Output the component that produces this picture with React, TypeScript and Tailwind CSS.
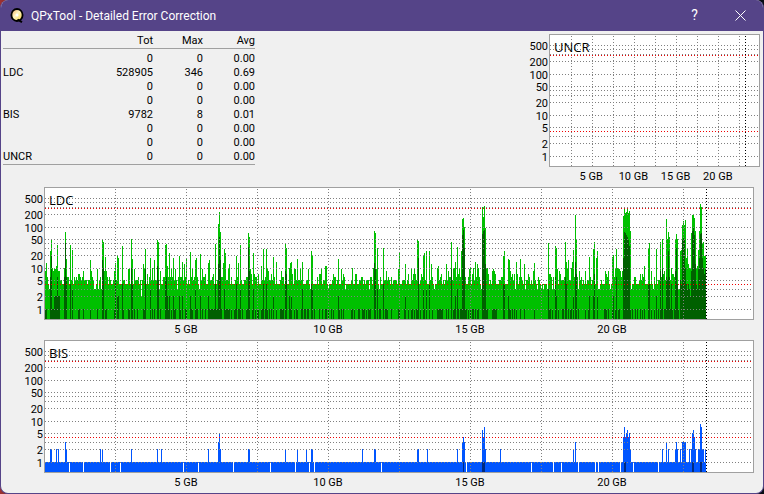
interface Row {
  name: string;
  tot: number;
  max: number;
  avg: string;
}

interface Series {
  max: number[];
  avg: number[];
  maxColor: string;
  avgColor: string;
}

const rows: Row[] = [
  { name: "", tot: 0, max: 0, avg: "0.00" },
  { name: "LDC", tot: 528905, max: 346, avg: "0.69" },
  { name: "", tot: 0, max: 0, avg: "0.00" },
  { name: "", tot: 0, max: 0, avg: "0.00" },
  { name: "BIS", tot: 9782, max: 8, avg: "0.01" },
  { name: "", tot: 0, max: 0, avg: "0.00" },
  { name: "", tot: 0, max: 0, avg: "0.00" },
  { name: "UNCR", tot: 0, max: 0, avg: "0.00" },
];

const COLUMNS = 661;
const FIRST = 45;
const PLOT_HEIGHT = 131;
const TICKS = [500, 200, 100, 50, 20, 10, 5, 2, 1];
const GRID = [500, 400, 300, 200, 100, 50, 40, 30, 20, 10, 5, 3, 2, 1];
const SIZES = ["5 GB", "10 GB", "15 GB", "20 GB"];

// "column:errors" pairs, columns without an entry hold background noise
const LDC_MAX = `45:8 46:13 47:6 48:4 49:3 50:25 51:50 52:10 53:8 54:10 55:9 56:11 57:35 58:8 59:8 60:5 61:5 62:4
64:10 65:72 66:16 67:6 68:6 69:4 70:35 71:5 72:27 73:4 74:6 75:5 76:6 77:5 78:7 79:7 80:6 81:5 82:6 83:8 84:5 85:5
86:5 87:4 88:5 89:5 90:15 91:8 92:6 93:5 94:3 95:3 96:4 97:9 98:3 99:5 100:6 101:3 102:50 103:42 104:8 105:18 106:8
107:6 108:4 109:6 110:5 111:4 112:4 113:5 114:8 115:13 116:5 117:19 118:17 119:4 120:4 121:4 122:33 123:5 124:5
125:4 126:4 127:4 128:9 129:9 130:4 131:50 132:16 133:4 134:9 135:5 136:5 137:5 138:6 139:4 140:5 141:2 142:5
143:12 144:10 145:28 146:4 147:7 148:4 149:6 150:17 151:5 152:10 153:5 154:15 155:5 156:5 157:47 158:42 159:3 160:8
161:4 162:4 163:6 164:6 165:35 166:37 167:11 168:6 169:22 170:6 171:10 172:6 173:17 174:5 175:9 176:5 177:3 178:6
179:19 180:6 181:6 182:14 183:5 184:12 185:6 186:16 188:5 190:24 191:6 192:10 195:15 196:17 197:6 198:4 199:3 200:21
202:9 205:7 208:13 209:15 213:7 215:37 218:114 219:232 220:72 221:6 222:6 223:13 224:28 225:22 228:10 229:12 231:6
233:4 234:4 236:19 238:13 240:35 241:5 248:69 249:55 250:9 251:7 252:4 253:22 254:7 258:7 261:11 263:28 264:5 266:28
267:10 268:8 271:7 273:18 274:6 276:14 278:4 279:4 281:8 285:37 286:30 287:4 288:4 289:10 290:13 291:14 292:7 293:4
294:10 295:9 297:16 300:9 302:14 304:4 305:4 308:9 310:3 311:25 312:20 314:4 315:4 316:4 319:7 320:7 321:9 325:11
326:11 328:3 333:7 338:16 341:9 343:7 345:3 346:4 347:4 348:4 349:4 350:4 352:10 353:4 355:7 356:7 357:4 358:4 369:3
373:10 374:77 375:69 376:9 377:30 378:4 379:3 383:30 386:8 391:6 398:9 399:22 400:4 405:12 408:7 411:9 413:7 414:9
415:7 417:50 418:44 421:7 423:19 424:22 426:25 429:25 431:12 434:3 437:10 438:11 441:7 446:12 448:8 451:41 453:9
454:10 455:14 456:6 457:31 458:7 459:9 460:6 461:25 462:151 463:160 464:96 465:6 466:4 467:4 469:9 470:10 472:7
473:10 475:14 477:12 478:10 479:6 480:4 481:3 482:296 483:169 484:313 485:91 486:10 487:10 488:7 491:4 492:8 493:9
494:8 495:7 503:19 504:25 505:4 508:16 509:15 510:8 512:7 514:7 515:3 516:14 517:7 518:4 520:16 521:6 524:12 525:3
528:7 533:8 534:13 535:5 536:4 537:3 538:6 539:5 540:4 541:3 542:4 543:3 544:4 545:4 546:4 547:3 548:39 549:7 550:7
551:6 552:3 553:6 554:3 555:33 556:30 557:9 559:8 560:7 565:41 566:14 567:9 568:15 571:10 572:14 573:26 574:6 575:189
576:50 577:6 578:3 579:8 585:8 589:18 593:28 594:41 596:17 597:25 598:3 599:3 600:4 605:8 606:7 608:8 610:3 611:4
612:18 613:20 614:6 615:10 616:28 617:10 618:10 619:9 620:8 621:6 622:8 623:178 624:265 625:211 626:224 627:280
628:211 629:237 630:77 631:3 632:4 633:4 640:7 642:7 644:11 648:30 649:39 650:4 651:8 652:4 653:3 654:6 655:4 656:28
657:4 660:41 661:6 662:49 663:7 664:8 665:5 666:151 667:50 668:72 669:55 670:5 671:10 672:7 673:7 674:6 675:46 676:65
677:49 678:3 679:3 680:25 681:26 682:108 683:135 684:108 685:142 686:17 687:28 688:12 689:10 690:9 691:69 692:189
693:189 694:160 695:77 696:10 697:11 698:26 699:77 700:350 701:296 702:39 703:41 704:19 705:20`;

const LDC_AVG = `45:1 46:1 50:6 51:20 52:1 53:1 54:2 55:2 56:2 57:6 58:2 59:2 64:6 65:39 66:6 70:4 72:3 78:1 79:1 83:1
90:1 97:1 102:15 103:10 105:1 106:1 114:1 115:5 117:2 118:2 122:4 123:1 128:1 129:1 131:10 132:4 134:1 137:1 143:1
144:1 145:9 150:3 152:1 154:1 157:11 158:5 160:1 165:5 166:6 167:2 168:1 169:2 171:1 173:2 174:1 175:1 179:2 180:1
182:2 185:1 186:1 190:2 191:1 192:1 195:3 196:1 197:1 200:2 202:1 205:1 208:2 209:1 210:1 211:1 212:1 213:1 214:1
215:4 216:1 217:1 218:12 219:56 220:15 221:1 224:3 225:1 226:1 227:1 228:1 229:1 231:1 234:1 235:1 236:4 238:1 239:1
240:3 242:1 246:1 247:1 248:31 249:8 252:1 253:3 255:1 257:1 258:1 261:1 262:1 263:4 265:1 266:4 267:1 269:1 271:1
273:2 276:1 280:1 281:1 282:1 283:1 285:8 286:7 289:2 290:1 291:2 294:1 296:1 297:1 301:1 302:3 304:1 305:1 307:1
308:1 311:4 312:3 314:1 319:1 322:1 325:1 326:1 328:1 331:1 333:1 338:2 339:1 341:1 343:1 351:1 352:1 354:1 358:1
359:1 362:1 363:1 364:1 366:1 368:1 369:1 370:1 374:13 375:9 377:3 379:1 380:1 383:4 385:1 386:1 387:1 391:1 398:1
399:1 404:1 405:2 408:1 411:1 412:1 414:1 416:1 417:1 418:17 420:1 423:3 424:1 426:3 429:4 432:1 437:1 438:1 439:1
440:1 441:1 442:1 446:1 448:1 451:9 453:1 454:1 455:2 457:3 458:1 460:1 461:1 462:61 463:81 464:30 465:1 466:1 468:1
470:1 472:1 473:1 475:1 477:1 478:1 482:65 483:77 484:81 485:12 486:1 487:1 492:1 493:1 494:1 495:1 496:1 503:4
504:4 508:2 509:1 510:1 512:1 514:1 516:1 520:1 524:1 534:1 548:3 549:1 550:1 552:1 555:6 556:2 558:1 562:1 563:1
565:6 566:4 568:1 570:1 571:1 573:2 575:14 576:7 578:1 585:1 588:1 589:2 593:2 594:7 597:2 604:1 605:1 606:1 608:1
612:1 613:2 615:1 616:6 618:1 619:1 623:17 624:72 625:69 626:61 627:55 628:46 629:33 630:1 632:1 635:1 637:1 640:1
642:1 644:1 648:4 649:4 651:1 654:1 656:2 658:1 660:8 661:1 662:9 664:1 665:1 666:6 667:5 668:25 669:6 670:1 671:4
672:1 674:1 675:8 676:30 677:4 678:1 680:5 681:4 682:46 683:55 684:49 685:10 686:4 687:3 688:4 689:3 690:2 691:8
692:77 693:91 694:61 695:12 696:4 697:3 698:9 699:17 700:65 701:69 702:17 703:10 704:7 705:10`;

const BIS_MAX = `50:2 51:2 56:2 58:2 65:3 66:2 69:0 83:0 100:2 102:2 110:0 120:0 131:2 157:2 161:2 183:0 198:0 208:2 218:3
219:5 220:2 233:0 248:2 249:2 270:0 285:2 295:0 297:2 306:2 309:0 311:2 312:2 314:0 362:2 374:2 375:2 381:0 417:2
418:2 427:2 457:2 462:3 463:4 464:3 466:0 482:6 483:4 484:7 485:2 500:2 531:0 553:0 561:0 573:2 575:3 578:0 595:0
598:0 620:0 623:4 624:7 625:4 626:5 627:6 628:4 629:5 630:2 633:0 658:0 662:2 666:3 668:2 675:2 676:3 677:2 680:2
682:3 683:3 684:3 685:3 689:2 691:2 692:5 693:6 694:4 695:2 698:2 699:2 700:8 701:7 702:2 703:2 705:2`;

const BIS_AVG = "463:1 482:1 483:1 484:1 624:1 625:1 692:1 693:1 700:1 701:1";

function parse(text: string, fill: (i: number) => number) {
  const out = Array.from({ length: COLUMNS }, (_, i) => fill(i));
  for (const pair of text.split(/\s+/)) {
    const [col, value] = pair.split(":").map(Number);
    out[col - FIRST] = value;
  }
  return out;
}

const noise = (i: number) => [4, 5, 5, 4, 6, 5, 4, 5, 6, 5, 4][(i * 7 + (i >> 3) * 3) % 11];

const ldc: Series = {
  max: parse(LDC_MAX, noise),
  avg: parse(LDC_AVG, () => 0),
  maxColor: "#00c000",
  avgColor: "#006000",
};

const bis: Series = {
  max: parse(BIS_MAX, () => 1),
  avg: parse(BIS_AVG, () => 0),
  maxColor: "#0055ff",
  avgColor: "#002a80",
};

// log scale, 41px per decade
const yOf = (v: number) => Math.floor(121 - 41 * Math.log10(v));

function bars(values: number[]) {
  return values
    .map((v, i) => (v > 0 ? `M${i} ${yOf(v)}h1V${PLOT_HEIGHT}h-1z` : ""))
    .join("");
}

function Chart({ title, width, series }: { title: string; width: number; series?: Series }) {
  const step = (width + 1) / 10;
  const verticals = [1, 2, 3, 4, 5, 6, 7, 8, 9].map((k) => Math.floor(step * k));
  const end = Math.floor(step * 9.33);

  return (
    <section aria-label={title} className="flex w-full">
      <svg width="43" height="133" className="shrink-0 text-[11px]" fill="#000">
        {TICKS.map((t) => (
          <text key={t} x="42" y={yOf(t) + 6} textAnchor="end">{t}</text>
        ))}
      </svg>
      <div className="min-w-0 flex-1">
        <div className="relative h-[133px] border border-[#a0a0a0] bg-white">
          <svg
            viewBox={`0 0 ${width} ${PLOT_HEIGHT}`}
            preserveAspectRatio="none"
            shapeRendering="crispEdges"
            className="block h-full w-full"
          >
            {series && <path d={bars(series.max)} fill={series.maxColor} />}
            {series && <path d={bars(series.avg)} fill={series.avgColor} />}
            <g stroke="#808080" strokeDasharray="1 2">
              {GRID.map((v) => (
                <line key={v} x1="0" x2={width} y1={yOf(v) + 0.5} y2={yOf(v) + 0.5} />
              ))}
              {verticals.map((x) => (
                <line key={x} x1={x + 0.5} x2={x + 0.5} y1="1" y2={PLOT_HEIGHT} />
              ))}
            </g>
            <g stroke="#f00000" strokeDasharray="1 2">
              <line x1="0" x2={width} y1="20.5" y2="20.5" />
              <line x1="0" x2={width} y1="96.5" y2="96.5" />
            </g>
            <line x1={end + 0.5} x2={end + 0.5} y1="1" y2={PLOT_HEIGHT} stroke="#000" strokeDasharray="1 2" />
          </svg>
          <h2 className="absolute left-1 top-1 font-['Open_Sans','Noto_Sans',sans-serif] text-[13px] leading-4">{title}</h2>
        </div>
        <div className="flex h-5 justify-center text-center leading-5">
          {SIZES.map((s) => (
            <span key={s} className="w-1/5 whitespace-nowrap">{s}</span>
          ))}
        </div>
      </div>
    </section>
  );
}

function Logo() {
  return (
    <svg width="14" height="15" viewBox="0 0 14 15" aria-hidden="true">
      <defs>
        <linearGradient id="disc" x1="0" y1="0" x2="1" y2="1">
          <stop offset="0" stopColor="#f0a860" />
          <stop offset="0.45" stopColor="#fff4c0" />
          <stop offset="1" stopColor="#f8d040" />
        </linearGradient>
      </defs>
      <ellipse cx="7" cy="7" rx="5.6" ry="6" fill="url(#disc)" stroke="#000" strokeWidth="1.8" />
      <circle cx="7" cy="7" r="1.5" fill="#fff" />
      <path d="M7.5 11.5l4.5 2.7" stroke="#000" strokeWidth="2" />
    </svg>
  );
}

export default function App() {
  return (
    <div className="min-h-screen bg-linear-to-r from-[#a03030] via-[#101820] via-5% to-[#080c14] font-[Roboto,'Open_Sans',sans-serif] text-[11px] text-black">
      <div className="min-h-screen overflow-hidden rounded-lg border-x border-b border-[#554488] bg-[#f0f0f0]">
        <header className="flex h-[31px] items-center bg-[#554488] pl-[9px] text-white">
          <Logo />
          <h1 className="ml-[7px] flex-1 text-[12px]">QPxTool - Detailed Error Correction</h1>
          <button aria-label="Help" className="h-full w-[45px] text-[14px]">?</button>
          <button aria-label="Close" className="flex h-full w-[46px] items-center justify-center">
            <svg width="11" height="11" viewBox="0 0 11 11" stroke="#fff" fill="none">
              <path d="M.5.5l10 10M10.5.5l-10 10" />
            </svg>
          </button>
        </header>

        <main className="pt-[3px]">
          <div className="flex items-start justify-between pl-[2px] pr-[3px]">
            <table className="w-[252px] table-fixed border-separate border-spacing-0 text-right leading-[14px]">
              <thead>
                <tr className="[&>th]:border-b [&>th]:border-[#a0a0a0] [&>th]:p-0 [&>th]:font-normal">
                  <td className="w-[100px] border-b border-[#a0a0a0] p-0"></td>
                  <th scope="col" className="w-[50px]">Tot</th>
                  <th scope="col" className="w-[50px]">Max</th>
                  <th scope="col">Avg</th>
                </tr>
              </thead>
              <tbody className="[&>tr:first-child>*]:pt-[3px] [&>tr:last-child>*]:border-b [&>tr:last-child>*]:border-[#a0a0a0]">
                {rows.map((r, i) => (
                  <tr key={i}>
                    <th scope="row" className="text-left font-normal">{r.name}</th>
                    <td>{r.tot}</td>
                    <td>{r.max}</td>
                    <td>{r.avg}</td>
                  </tr>
                ))}
              </tbody>
            </table>
            <div className="w-[254px]">
              <Chart title="UNCR" width={209} />
            </div>
          </div>
          <div className="pr-[9px]">
            <Chart title="LDC" width={708} series={ldc} />
            <Chart title="BIS" width={708} series={bis} />
          </div>
        </main>
      </div>
    </div>
  );
}
